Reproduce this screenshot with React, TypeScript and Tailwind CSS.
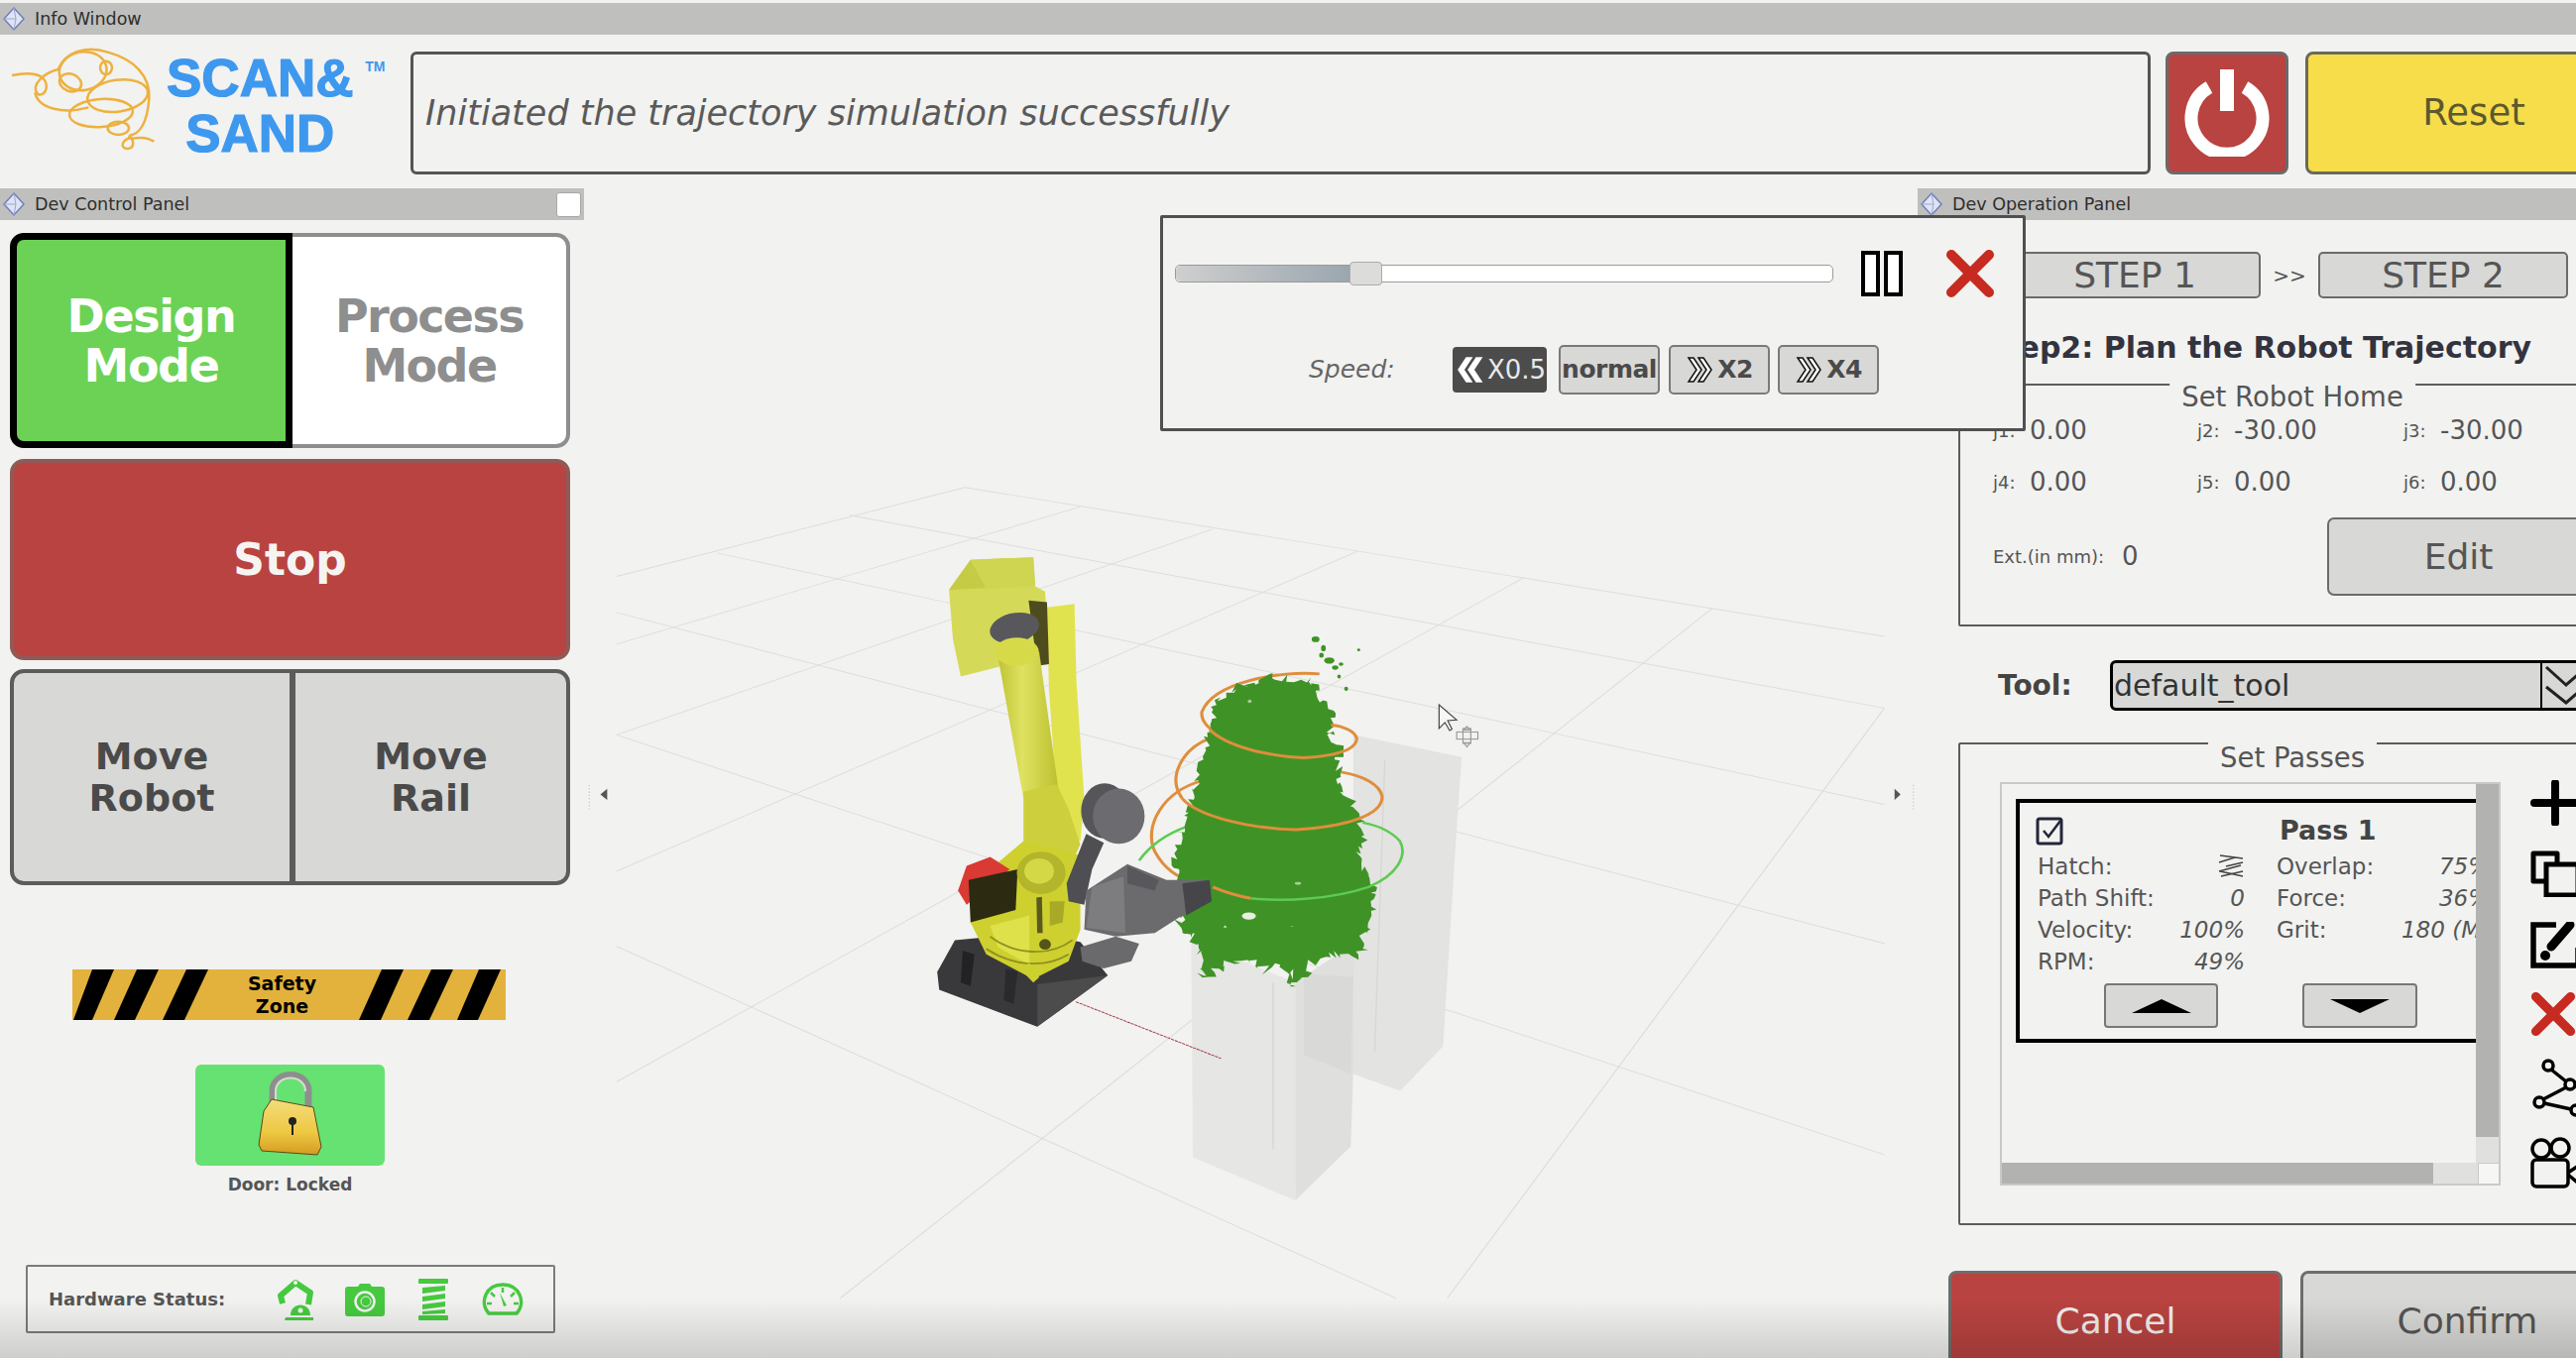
import React from "react";

function Diamond() {
  return (
    <svg width="22" height="26" viewBox="0 0 22 26" className="shrink-0">
      <path d="M11 2 L21 13 L11 24 L1 13 Z" fill="#dfe4f4" stroke="#6f80b8" strokeWidth="1.5" />
      <path d="M11 2 L13 13 L11 24 M1 13 L13 13" fill="none" stroke="#9aa8d2" strokeWidth="1" />
    </svg>
  );
}

function TitleBar({ title, children }: { title: string; children?: React.ReactNode }) {
  return (
    <div className="flex items-center h-[32px] bg-[#bfbfbd] pl-[3px]">
      <Diamond />
      <span className="ml-[10px] text-[17.5px] text-[#2e2e2e]">{title}</span>
      {children}
    </div>
  );
}

function RedX({ size = 50 }: { size?: number }) {
  return (
    <svg width={size} height={size} viewBox="0 0 50 50" className="block">
      <path d="M6 6 L44 44 M44 6 L6 44" stroke="#c62a20" strokeWidth="10" strokeLinecap="round" fill="none" />
    </svg>
  );
}

function Chevrons({ dir, white }: { dir: "left" | "right"; white?: boolean }) {
  const d =
    dir === "left"
      ? "M13 2 L5 14 L13 26 L18 26 L10 14 L18 2 Z M23 2 L15 14 L23 26 L28 26 L20 14 L28 2 Z"
      : "M3 2 L11 14 L3 26 L8 26 L16 14 L8 2 Z M13 2 L21 14 L13 26 L18 26 L26 14 L18 2 Z";
  return (
    <svg width="30" height="28" viewBox="0 0 30 28" className="shrink-0">
      <path d={d} fill="#fff" stroke={white ? "#fff" : "#111"} strokeWidth="1.5" />
    </svg>
  );
}

function Logo() {
  return (
    <div className="flex w-[414px] shrink-0 pl-[2px] mt-[-12px]">
      <svg width="158" height="112" viewBox="0 0 474 336" className="shrink-0">
        <g fill="none" stroke="#edb13f" strokeWidth="7.5">
          <path d="M30 108 C70 100 90 100 110 108 C150 125 135 175 108 165 C85 135 130 100 170 90 C190 40 250 15 320 38 C400 60 450 110 445 180 C440 240 425 285 385 290" />
          <ellipse cx="245" cy="95" rx="72" ry="58" transform="rotate(-10 245 95)" />
          <ellipse cx="207" cy="130" rx="34" ry="26" transform="rotate(20 207 130)" />
          <ellipse cx="315" cy="85" rx="18" ry="20" />
          <ellipse cx="300" cy="222" rx="96" ry="42" transform="rotate(-4 300 222)" />
          <ellipse cx="350" cy="170" rx="92" ry="48" transform="rotate(-8 350 170)" />
          <ellipse cx="352" cy="268" rx="32" ry="20" />
          <path d="M100 160 C110 212 190 225 262 205" />
          <path d="M390 300 C430 294 440 298 460 308 M382 292 C402 302 402 330 378 330 C356 328 362 300 395 296" />
        </g>
      </svg>
      <div className="relative flex flex-col items-center ml-[8px] mt-[11px] font-['Liberation_Sans',sans-serif] font-bold text-[#3e98ee] text-[53px] leading-[56px] [-webkit-text-stroke:1.2px_#3e98ee]">
        <span>SCAN&amp;</span>
        <span>SAND</span>
        <span className="absolute right-[-32px] top-[9px] text-[14px] leading-[14px] [-webkit-text-stroke:0px]">TM</span>
      </div>
    </div>
  );
}

function SafetyBanner() {
  return (
    <div className="relative ml-[73px] w-[437px] h-[51px] bg-[#e3b23c] flex items-center justify-center pr-[14px]">
      <svg width="437" height="51" viewBox="0 0 437 51" className="absolute inset-0">
        {[
          [20, 42, 1, 20],
          [65, 87, 42, 63],
          [115, 137, 91, 113],
          [312, 334, 289, 311],
          [362, 384, 338, 360],
          [410, 432, 388, 409],
        ].map(([a, b, c, d], i) => (
          <polygon key={i} points={`${a},0 ${b},0 ${d},51 ${c},51`} fill="#000" />
        ))}
      </svg>
      <div className="relative text-center text-[19px] leading-[23px] font-bold text-black">
        Safety
        <br />
        Zone
      </div>
    </div>
  );
}

function LockIcon() {
  return (
    <svg width="66" height="88" viewBox="0 0 66 88">
      <defs>
        <linearGradient id="lockBody" x1="0" y1="0" x2="0" y2="1">
          <stop offset="0" stopColor="#f3dc7a" />
          <stop offset="0.6" stopColor="#eec843" />
          <stop offset="1" stopColor="#d49a20" />
        </linearGradient>
      </defs>
      <path d="M15 36 V20 C15 -2 51 -2 51 20 V38" fill="none" stroke="#8d8f8c" strokeWidth="7" />
      <path d="M18 34 V20 C18 2 48 2 48 20" fill="none" stroke="#d9dad6" strokeWidth="2" />
      <path d="M6 40 L14 28 L56 36 L64 76 L60 84 L4 80 L1 74 Z" fill="url(#lockBody)" stroke="#5a4a14" strokeWidth="1" />
      <circle cx="35" cy="50" r="4" fill="#222" />
      <path d="M35 52 V64" stroke="#222" strokeWidth="2" />
    </svg>
  );
}

function StatusIcons() {
  return (
    <div className="flex items-center">
      <svg width="38" height="42" viewBox="0 0 38 42" className="ml-[41px]" fill="#46c93f">
        <path d="M5 25 L3 17 L18 4 L33 14 L31 26" fill="none" stroke="#46c93f" strokeWidth="6" strokeLinejoin="round" />
        <circle cx="18" cy="4" r="2" fill="#f2f2f0" />
        <path d="M8 39 H36 V42 H7 Z M13 37 C13 23 33 23 33 37 Z" />
        <circle cx="23" cy="32" r="2.5" fill="#f2f2f0" />
      </svg>
      <svg width="40" height="34" viewBox="0 0 40 34" className="ml-[30px]">
        <path d="M13 4 L15 1 H25 L27 4 H37 C39 4 40 5 40 7 V31 C40 33 39 34 37 34 H3 C1 34 0 33 0 31 V7 C0 5 1 4 3 4 Z" fill="#46c93f" />
        <circle cx="20" cy="19" r="9.5" fill="none" stroke="#f2f2f0" strokeWidth="2.5" />
        <circle cx="21" cy="19" r="5" fill="none" stroke="#f2f2f0" strokeWidth="1" />
      </svg>
      <svg width="30" height="42" viewBox="0 0 30 42" className="ml-[34px]" fill="#46c93f">
        <rect x="0" y="0" width="30" height="5" rx="1" />
        <rect x="0" y="37" width="30" height="5" rx="1" />
        <path d="M4 9 L27 7 V12 L4 15 Z M4 18 L27 15 V20 L4 23 Z M4 26 L27 23 V28 L4 31 Z M4 33 L27 31 V35 L4 36 Z" />
      </svg>
      <svg width="42" height="34" viewBox="0 0 42 34" className="ml-[34px]">
        <path d="M7 31 C-3 20 4 2 21 2 C38 2 45 20 35 31 Z" fill="none" stroke="#46c93f" strokeWidth="3.5" strokeLinejoin="round" />
        <path d="M21 5 V10 M9 10 L13 14 M33 10 L29 14 M5 21 H10 M37 21 H32" stroke="#46c93f" strokeWidth="2.5" />
        <path d="M18 10 L22 24 L25 23 Z" fill="#46c93f" />
      </svg>
    </div>
  );
}

function LeftPanel() {
  return (
    <div className="w-[589px] shrink-0">
      <TitleBar title="Dev Control Panel">
        <span className="ml-auto mr-[3px] w-[25px] h-[25px] bg-white border border-[#a8a8a8] rounded-[3px]" />
      </TitleBar>
      <div className="flex w-[565px] h-[217px] ml-[10px] mt-[13px]">
        <div className="w-[285px] bg-[#6bd255] border-[7px] border-black rounded-l-[14px] flex items-center justify-center text-center text-white font-bold text-[46px] leading-[50px] tracking-[-1.4px]">
          Design
          <br />
          Mode
        </div>
        <div className="flex-1 bg-white border-[4px] border-l-0 border-[#8e8e8e] rounded-r-[14px] flex items-center justify-center text-center text-[#8e8e8e] font-bold text-[46px] leading-[50px] tracking-[-1.6px]">
          Process
          <br />
          Mode
        </div>
      </div>
      <div className="w-[565px] h-[203px] ml-[10px] mt-[11px] bg-[#b94340] border-[4px] border-[#8f5a58] rounded-[14px] flex items-center justify-center text-[#f6f4f2] font-bold text-[44px]">
        Stop
      </div>
      <div className="flex w-[565px] h-[218px] ml-[10px] mt-[9px] bg-[#d8d8d6] border-[4px] border-[#5c5c5c] rounded-[14px] text-[#4a4a4a] font-bold text-[38px] leading-[42px] text-center">
        <div className="w-[284px] border-r-[6px] border-[#5c5c5c] flex items-center justify-center">
          Move
          <br />
          Robot
        </div>
        <div className="flex-1 flex items-center justify-center">
          Move
          <br />
          Rail
        </div>
      </div>
      <div className="mt-[85px]">
        <SafetyBanner />
      </div>
      <div className="ml-[197px] mt-[45px] w-[191px] h-[102px] bg-[#66e272] rounded-[6px] flex items-center justify-center">
        <LockIcon />
      </div>
      <div className="w-[191px] ml-[197px] mt-[8px] text-center text-[17px] leading-[22px] font-bold text-[#555]">Door: Locked</div>
      <div className="ml-[26px] mt-[70px] w-[534px] h-[69px] border-2 border-[#7b7b7b] rounded-[2px] flex items-center pl-[21px] bg-[#f2f2f0]">
        <span className="text-[18px] font-bold text-[#555] w-[190px]">Hardware Status:</span>
        <StatusIcons />
      </div>
    </div>
  );
}

// seeded jitter so the cloud edge stays the same every render
function jagged(pts: number[][], step: number, amp: number) {
  let seed = 17;
  const rnd = () => {
    seed = (seed * 16807) % 2147483647;
    return seed / 2147483647 - 0.5;
  };
  const out: string[] = [];
  pts.forEach((p, i) => {
    const q = pts[(i + 1) % pts.length];
    const len = Math.hypot(q[0] - p[0], q[1] - p[1]);
    const n = Math.max(1, Math.round(len / step));
    for (let k = 0; k < n; k++) {
      const x = p[0] + ((q[0] - p[0]) * k) / n + rnd() * amp;
      const y = p[1] + ((q[1] - p[1]) * k) / n + rnd() * amp;
      out.push(`${x.toFixed(1)},${y.toFixed(1)}`);
    }
  });
  return out.join(" ");
}

const cloud = [
  [940, 480], [1020, 455], [1120, 465], [1150, 520], [1180, 570], [1165, 620], [1190, 660], [1190, 720],
  [1195, 780], [1240, 840], [1255, 930], [1240, 960], [1270, 1020], [1285, 1080], [1255, 1170], [790, 1170],
  [790, 1100], [770, 980], [790, 870], [820, 790], [840, 680], [860, 600], [880, 520],
];

const fringe = [
  [785, 1150], [1260, 1150], [1248, 1240], [1180, 1245], [1120, 1265], [1090, 1315], [1068, 1320], [1062, 1275],
  [1000, 1285], [940, 1245], [900, 1285], [838, 1305], [855, 1255], [820, 1210],
];

const specks = [
  [1130, 350, 16, 12], [1150, 375, 8, 14], [1165, 410, 22, 14], [1195, 420, 8, 6], [1190, 455, 5, 7], [1208, 490, 6, 8], [1240, 380, 4, 4],
  [1145, 395, 8, 10], [1180, 430, 12, 8],
];

function Scene() {
  const grid = [
    "445,110 1522,378", "310,160 1522,507", "155,228 1522,680", "37,335 1522,930", "37,555 1522,1310", "37,935 950,1568",
    "445,110 37,270", "580,145 37,392", "735,185 37,555", "905,225 37,800", "1100,272 37,1179", "1320,328 299,1568", "1522,507 1010,1568",
  ];
  return (
    <svg width="1345" height="1180" viewBox="589 190 1345 1180" className="block shrink-0">
      <defs>
        <linearGradient id="tube" x1="0" y1="0" x2="1" y2="0">
          <stop offset="0" stopColor="#bfc332" />
          <stop offset="0.4" stopColor="#dfe262" />
          <stop offset="1" stopColor="#bcc02e" />
        </linearGradient>
      </defs>
      <g transform="translate(590 430) scale(0.861 0.561)">
        {grid.map((l, i) => (
          <polyline key={i} points={l} fill="none" stroke="#dddddb" strokeWidth="1.6" />
        ))}
        <polygon points="710,925 712,1315 832,1392 832,1000" fill="#e6e6e4" />
        <polygon points="832,1000 832,1392 897,1295 905,925" fill="#dfdfdd" />
        <line x1="806" y1="1000" x2="806" y2="1300" stroke="#d6d6d4" strokeWidth="1.5" />
        <polygon points="900,555 1027,595 1022,700 1005,1115 955,1195 900,1165 900,700" fill="#e3e3e1" />
        <polygon points="842,985 900,990 897,1165 842,1130" fill="#d9d9d7" />
        <line x1="937" y1="600" x2="925" y2="1125" stroke="#d6d6d4" strokeWidth="1.5" />
        <line x1="575" y1="1035" x2="745" y2="1137" stroke="#a33a4a" strokeWidth="1.6" strokeDasharray="4 1" />
        <path d="M26 652 L18 662 L26 672 Z" fill="#555" />
        <path d="M1534 652 L1541 662 L1534 672 Z" fill="#555" />
        <line x1="5" y1="645" x2="5" y2="690" stroke="#c8c8c8" strokeWidth="1.5" strokeDasharray="2 4" />
        <line x1="1556" y1="645" x2="1556" y2="690" stroke="#c8c8c8" strokeWidth="1.5" strokeDasharray="2 4" />
      </g>
      <g transform="translate(880 520) scale(0.3954 0.357)">
        {/* pedestal under the robot */}
        <polygon points="165,1290 210,1200 400,1180 530,1205 600,1300 420,1445 170,1340" fill="#39393b" />
        <polygon points="420,1325 600,1300 420,1445" fill="#4c4c4c" />
        <polygon points="230,1230 260,1240 250,1330 225,1320" fill="#222224" />
        <polygon points="340,1280 370,1290 360,1380 335,1370" fill="#2a2a2c" />
        {/* rear block */}
        <polygon points="250,125 410,118 415,200 440,215 445,300 420,400 225,455 205,350 195,210" fill="#d4da58" />
        <polygon points="250,125 290,205 195,210" fill="#c5cb45" />
        <polygon points="250,125 410,118 415,200 290,208" fill="#cfd451" />
        <polygon points="445,260 515,250 520,470 540,800 530,920 475,880 450,490" fill="#e0e34e" />
        <polygon points="398,240 445,245 450,420 420,425" fill="#4e4c1e" />
        {/* arm */}
        <polygon points="320,400 425,385 475,780 385,800" fill="url(#tube)" />
        <ellipse cx="362" cy="318" rx="64" ry="42" transform="rotate(-15 362 318)" fill="#58585c" />
        <ellipse cx="368" cy="385" rx="56" ry="40" fill="#d7da48" />
        <polygon points="385,780 470,760 500,830 530,930 500,1000 430,940 385,920" fill="#cdd03c" />
        {/* lower body */}
        <polygon points="250,1150 300,1000 385,920 530,960 530,1170 500,1260 410,1310 290,1240" fill="#cdd02e" />
        <polygon points="300,1160 400,1130 400,1270 320,1220" fill="#dfe14a" />
        <polygon points="240,990 300,965 350,1000 240,1100 218,1060" fill="#d93a33" />
        <polygon points="245,1030 370,1000 365,1115 250,1150" fill="#2c2a10" />
        <ellipse cx="430" cy="1010" rx="62" ry="60" fill="#b3b52a" />
        <ellipse cx="425" cy="1005" rx="38" ry="36" fill="#d5d846" />
        <polygon points="418,1080 432,1078 434,1180 420,1180" fill="#5a5a1f" />
        <polygon points="452,1090 490,1090 485,1150 452,1160" fill="#a8aa25" />
        <ellipse cx="440" cy="1212" rx="15" ry="15" fill="#55531a" />
        <path d="M300 1190 C360 1240 450 1250 510 1200 M290 1225 C360 1275 440 1280 500 1240" fill="none" stroke="#8f9120" strokeWidth="5" />
        <polygon points="375,1280 400,1265 425,1305 410,1320" fill="#cdd02e" />
        {/* cloud and rings */}
        <path d="M1140 448 C1040 438 870 470 840 555 C835 600 900 640 1000 665" fill="none" stroke="#df8e3d" strokeWidth="8" />
        <path d="M860 630 C790 660 750 740 790 800" fill="none" stroke="#df8e3d" strokeWidth="8" />
        <path d="M840 750 C740 780 690 880 720 950 C745 1000 780 1025 810 1030" fill="none" stroke="#df8e3d" strokeWidth="8" />
        <path d="M680 975 C710 930 750 900 800 880" fill="none" stroke="#5dcb52" strokeWidth="7" />
        <polygon points={jagged(cloud, 9, 24)} fill="#3f9326" />
        <polygon points={jagged(fringe, 8, 32)} fill="#3f9326" />
        {specks.map(([x, y, w, h], i) => (
          <ellipse key={i} cx={x} cy={y} rx={w / 2 + 2} ry={h / 2 + 2} fill="#3f9326" />
        ))}
        <ellipse cx="960" cy="1132" rx="18" ry="10" fill="#e7efe2" />
        <ellipse cx="962" cy="525" rx="5" ry="5" fill="#a5cc96" />
        <ellipse cx="1085" cy="1040" rx="8" ry="4" fill="#a5cc96" />
        <path d="M860 605 C900 650 1000 680 1100 685 C1170 680 1235 665 1235 630 C1230 610 1200 595 1170 592" fill="none" stroke="#df8e3d" strokeWidth="8" />
        <path d="M790 800 C830 850 960 885 1080 888 C1200 880 1300 850 1300 795 C1295 760 1250 735 1195 725" fill="none" stroke="#df8e3d" strokeWidth="8" />
        <path d="M868 1050 C900 1065 930 1075 965 1082" fill="none" stroke="#df8e3d" strokeWidth="8" />
        <path d="M965 1082 C1050 1092 1170 1085 1265 1050 C1340 1015 1365 960 1345 920 C1320 890 1285 875 1250 868" fill="none" stroke="#5dcb52" strokeWidth="7" />
        {/* tool on the flange, in front of the cloud */}
        <ellipse cx="592" cy="835" rx="60" ry="78" fill="#55555a" />
        <ellipse cx="628" cy="850" rx="66" ry="78" fill="#6c6c70" />
        <polygon points="545,900 590,925 560,1000 540,1100 500,1090 495,1040" fill="#4e4e53" />
        <polygon points="545,1060 650,985 750,1030 850,1030 865,1090 790,1130 720,1180 620,1190 540,1170" fill="#6b6b6e" />
        <polygon points="560,1050 640,1020 645,1180 545,1165" fill="#7d7d80" />
        <polygon points="650,990 730,1030 720,1060 650,1040" fill="#58585c" />
        <polygon points="790,1040 860,1030 865,1090 800,1130" fill="#46464a" />
        <polygon points="530,1220 620,1190 680,1210 660,1260 590,1280 535,1260" fill="#6a6a6d" />
        {/* cursor */}
        <path d="M1445 535 L1445 602 L1460 585 L1472 608 L1478 604 L1467 580 L1490 578 Z" fill="#f7f7f5" stroke="#444" strokeWidth="3" />
        <g fill="none" stroke="#9a9a9a" strokeWidth="3">
          <rect x="1490" y="612" width="54" height="20" />
          <rect x="1506" y="602" width="20" height="42" />
          <path d="M1516 596 L1508 606 H1524 Z M1516 654 L1508 642 H1524 Z" />
        </g>
      </g>
    </svg>
  );
}

function Joint({ label, value }: { label: string; value: string }) {
  return (
    <div className="flex items-center h-[40px] text-[#555]">
      <span className="w-[37px] text-[18px]">{label}</span>
      <span className="text-[26px]">{value}</span>
    </div>
  );
}

function PassRow({ label, value }: { label: string; value: React.ReactNode }) {
  return (
    <div className="flex justify-between items-center h-[32px] text-[23px] text-[#565656]">
      <span className="whitespace-nowrap">{label}</span>
      <span className="italic whitespace-nowrap">{value}</span>
    </div>
  );
}

function PassCard() {
  return (
    <div className="relative w-[520px] h-[246px] border-[4px] border-black pt-[13px] pl-[16px] ml-[14px] mt-[15px]">
      <div className="flex items-center h-[30px]">
        <svg width="28" height="30" viewBox="0 0 28 30" className="shrink-0">
          <rect x="2" y="3" width="24" height="25" rx="2" fill="none" stroke="#23263a" strokeWidth="3" />
          <path d="M8 15 L13 21 L25 5" fill="none" stroke="#23263a" strokeWidth="2.5" />
        </svg>
        <span className="ml-[218px] text-[27px] font-bold text-[#444]">Pass 1</span>
      </div>
      <div className="grid grid-cols-[209px_215px] gap-x-[32px] mt-[5px] ml-[2px]">
        <PassRow
          label="Hatch:"
          value={
            <svg width="28" height="26" viewBox="0 0 28 26" className="block">
              <path d="M3 2 L26 5 M2 9 L18 4 M9 13 L26 9 M2 18 L24 12 M4 23 L26 18 M3 18 L26 23" stroke="#444" strokeWidth="1.6" fill="none" />
            </svg>
          }
        />
        <PassRow label="Overlap:" value="75%" />
        <PassRow label="Path Shift:" value="0" />
        <PassRow label="Force:" value="36%" />
        <PassRow label="Velocity:" value="100%" />
        <PassRow label="Grit:" value="180 (M)" />
        <PassRow label="RPM:" value="49%" />
        <div />
      </div>
      <div className="flex mt-[6px] ml-[69px]">
        <div className="w-[115px] h-[45px] bg-[#d8d8d6] border-2 border-[#777] rounded-[4px] flex items-center justify-center">
          <svg width="60" height="14" viewBox="0 0 60 14">
            <path d="M0 14 L30 0 L60 14 Z" fill="#000" />
          </svg>
        </div>
        <div className="w-[116px] h-[45px] ml-[85px] bg-[#d8d8d6] border-2 border-[#777] rounded-[4px] flex items-center justify-center">
          <svg width="60" height="14" viewBox="0 0 60 14">
            <path d="M0 0 L60 0 L30 14 Z" fill="#000" />
          </svg>
        </div>
      </div>
    </div>
  );
}

function ToolColumn() {
  return (
    <div className="flex flex-col ml-[30px] mt-[-2px] w-[60px] shrink-0">
      <svg width="50" height="46" viewBox="0 0 50 46" className="block">
        <path d="M4 23 H46 M25 3 V43" stroke="#000" strokeWidth="8" strokeLinecap="round" />
      </svg>
      <svg width="50" height="47" viewBox="0 0 50 47" className="block mt-[25px]">
        <path d="M16 31 H3 V3 H27 V14" fill="none" stroke="#000" strokeWidth="5" strokeLinejoin="round" />
        <rect x="16" y="14" width="32" height="31" fill="none" stroke="#000" strokeWidth="5" />
      </svg>
      <svg width="50" height="47" viewBox="0 0 50 47" className="block mt-[25px]">
        <path d="M26 3 H3 V44 H48 V26" fill="none" stroke="#000" strokeWidth="5.5" />
        <path d="M21 25 L40 3" stroke="#000" strokeWidth="9" strokeLinecap="round" />
        <circle cx="15" cy="34" r="5" fill="#000" />
      </svg>
      <div className="mt-[23px]">
        <RedX size={46} />
      </div>
      <svg width="50" height="59" viewBox="0 0 50 59" className="block mt-[22px]">
        <g fill="none" stroke="#000" strokeWidth="3.5">
          <circle cx="18" cy="7" r="5" />
          <circle cx="40" cy="26" r="5" />
          <circle cx="9" cy="44" r="5" />
          <circle cx="46" cy="52" r="5" />
          <path d="M21 11 L36 23 M36 29 L13 41 M14 45 L41 51" />
        </g>
      </svg>
      <svg width="50" height="52" viewBox="0 0 50 52" className="block mt-[20px]">
        <g fill="none" stroke="#000" strokeWidth="3.5">
          <circle cx="11" cy="12" r="9" />
          <circle cx="30" cy="11" r="9" />
          <rect x="2" y="23" width="36" height="27" rx="4" />
          <path d="M38 36 L50 28 M38 38 L50 48" />
        </g>
      </svg>
    </div>
  );
}

function RightPanel() {
  return (
    <div className="w-[664px] shrink-0">
      <TitleBar title="Dev Operation Panel" />
      <div className="flex items-center mt-[32px] ml-[92px] text-[#555]">
        <div className="w-[254px] h-[47px] shrink-0 bg-[#d8d8d6] border-2 border-[#6b6b6b] rounded-[5px] flex items-center justify-center text-[36px]">STEP 1</div>
        <div className="w-[58px] shrink-0 text-center text-[20px]">&gt;&gt;</div>
        <div className="w-[252px] h-[47px] shrink-0 bg-[#d8d8d6] border-2 border-[#6b6b6b] rounded-[5px] flex items-center justify-center text-[36px]">STEP 2</div>
      </div>
      <div className="flex justify-end pr-[45px] mt-[29px] h-[40px] items-center text-[30px] font-bold text-[#33333f] whitespace-nowrap">
        Step2: Plan the Robot Trajectory
      </div>
      <div className="relative ml-[41px] mt-[17px] w-[670px] h-[245px] border-2 border-[#5c5c5c] rounded-[2px]">
        <span className="absolute left-[335px] top-[-5px] -translate-x-1/2 bg-[#f2f2f0] px-[12px] text-[27.5px] leading-[32px] text-[#555] whitespace-nowrap">Set Robot Home</span>
        <div className="grid grid-cols-[206px_208px_180px] gap-y-[12px] ml-[33px] mt-[25px]">
          <Joint label="j1:" value="0.00" />
          <Joint label="j2:" value="-30.00" />
          <Joint label="j3:" value="-30.00" />
          <Joint label="j4:" value="0.00" />
          <Joint label="j5:" value="0.00" />
          <Joint label="j6:" value="0.00" />
        </div>
        <div className="flex items-center mt-[16px] ml-[33px] text-[#555]">
          <span className="w-[130px] text-[18px]">Ext.(in mm):</span>
          <span className="text-[26px]">0</span>
          <div className="ml-[190px] w-[266px] h-[79px] shrink-0 bg-[#d8d8d6] border-2 border-[#6b6b6b] rounded-[7px] flex items-center justify-center text-[36px]">Edit</div>
        </div>
      </div>
      <div className="flex items-center mt-[34px] ml-[81px]">
        <span className="w-[113px] shrink-0 text-[28px] font-bold text-[#444]">Tool:</span>
        <div className="w-[520px] h-[51px] shrink-0 bg-[#d8d8d6] border-[3px] border-black rounded-[6px] flex items-center text-[30px] text-[#333] pl-[1px]">
          <span className="w-[430px]">default_tool</span>
          <span className="w-[60px] h-full border-l-2 border-black flex items-center">
            <svg width="40" height="45" viewBox="0 0 40 45">
              <path d="M4 4 L24 22 L40 8 M4 24 L24 40 L40 26" fill="none" stroke="#222" strokeWidth="3" />
            </svg>
          </span>
        </div>
      </div>
      <div className="relative ml-[41px] mt-[32px] w-[670px] h-[487px] border-2 border-[#5c5c5c] rounded-[2px] pt-[38px] pl-[40px] flex items-start">
        <span className="absolute left-[335px] top-[-3px] -translate-x-1/2 bg-[#f2f2f0] px-[12px] text-[27.5px] leading-[32px] text-[#555] whitespace-nowrap">Set Passes</span>
        <div className="w-[505px] h-[407px] border-2 border-[#c9c9c7] flex flex-col shrink-0">
          <div className="flex h-[382px]">
            <div className="w-[480px] overflow-hidden">
              <PassCard />
            </div>
            <div className="w-[23px] flex flex-col">
              <div className="h-[356px] bg-[#b2b2b0]" />
              <div className="flex-1 bg-[#e0e0de]" />
            </div>
          </div>
          <div className="flex flex-1">
            <div className="w-[435px] bg-[#b2b2b0]" />
            <div className="w-[45px] bg-[#e0e0de]" />
            <div className="flex-1 bg-[#f6f6f4] border-l border-t border-[#c9c9c7]" />
          </div>
        </div>
        <ToolColumn />
      </div>
      <div className="flex mt-[46px] ml-[31px] text-[36px]">
        <div className="w-[337px] h-[110px] shrink-0 bg-[#b94340] border-[3px] border-[#6e6e6e] rounded-[8px] flex items-center justify-center pb-[8px] text-[#f1efed]">Cancel</div>
        <div className="w-[337px] h-[110px] shrink-0 ml-[18px] bg-[#d8d8d6] border-[3px] border-[#6e6e6e] rounded-[8px] flex items-center justify-center pb-[8px] text-[#555]">Confirm</div>
      </div>
    </div>
  );
}

function SpeedButton({ children, active }: { children: React.ReactNode; active?: boolean }) {
  return (
    <div
      className={
        active
          ? "w-[95px] h-[46px] bg-[#4c4c4c] rounded-[4px] flex items-center justify-center gap-[4px] text-[#e8e8e8] text-[26px]"
          : "w-[102px] h-[50px] bg-[#d8d8d6] border-2 border-[#7a7a7a] rounded-[5px] flex items-center justify-center gap-[2px] text-[#4a4a4a] font-bold text-[25px] tracking-[-0.5px]"
      }
    >
      {children}
    </div>
  );
}

function SimPanel() {
  return (
    <div className="absolute left-[1170px] top-[217px] w-[873px] h-[218px] bg-[#f2f2f0] border-[3px] border-[#505050] rounded-[2px]">
      <div className="flex items-center h-[46px] mt-[33px] ml-[12px]">
        <div className="relative w-[664px] h-[18px] bg-white border border-[#9a9a9a] rounded-[5px] shrink-0">
          <div className="w-[176px] h-full rounded-l-[5px] bg-linear-to-r from-[#cfcfcf] to-[#9aa6ae]" />
          <div className="absolute left-[175px] top-[-4px] w-[33px] h-[24px] bg-[#dcdcda] border border-[#ababab] rounded-[4px]" />
        </div>
        <div className="flex ml-[28px] gap-[4px]">
          <div className="w-[19px] h-[46px] border-[4px] border-black bg-white" />
          <div className="w-[19px] h-[46px] border-[4px] border-black bg-white" />
        </div>
        <div className="ml-[43px]">
          <RedX size={50} />
        </div>
      </div>
      <div className="flex items-center mt-[49px] ml-[147px]">
        <span className="w-[145px] italic text-[#666] text-[25px]">Speed:</span>
        <SpeedButton active>
          <Chevrons dir="left" white />
          X0.5
        </SpeedButton>
        <div className="ml-[12px]">
          <SpeedButton>normal</SpeedButton>
        </div>
        <div className="ml-[9px]">
          <SpeedButton>
            <Chevrons dir="right" />
            X2
          </SpeedButton>
        </div>
        <div className="ml-[8px]">
          <SpeedButton>
            <Chevrons dir="right" />
            X4
          </SpeedButton>
        </div>
      </div>
    </div>
  );
}

export default function App() {
  return (
    <div className="relative w-[2598px] h-[1370px] overflow-hidden bg-[#f2f2f0] font-['DejaVu_Sans',sans-serif]">
      <div className="pt-[3px]">
        <TitleBar title="Info Window" />
      </div>
      <div className="flex h-[155px] pt-[17px] items-start">
        <Logo />
        <div className="w-[1755px] h-[124px] shrink-0 border-[3px] border-[#555] rounded-[6px] flex items-center pl-[12px] italic text-[35px] text-[#5a5a5a]">
          Initiated the trajectory simulation successfully
        </div>
        <div className="w-[124px] h-[124px] ml-[15px] shrink-0 bg-[#b94340] border-[3px] border-[#6a6a6a] rounded-[8px] flex items-center justify-center">
          <svg width="88" height="88" viewBox="0 0 88 88">
            <path d="M26 18 A36 36 0 1 0 62 18" fill="none" stroke="#fff" strokeWidth="13" />
            <rect x="37" y="0" width="14" height="42" fill="#fff" />
          </svg>
        </div>
        <div className="w-[340px] h-[124px] ml-[17px] shrink-0 bg-[#f7dd4a] border-[3px] border-[#6a6a5a] rounded-[8px] flex items-center justify-center text-[37px] text-[#5c5830]">
          Reset
        </div>
      </div>
      <div className="flex h-[1180px]">
        <LeftPanel />
        <Scene />
        <RightPanel />
      </div>
      <SimPanel />
      <div className="absolute inset-x-0 bottom-0 h-[60px] bg-linear-to-b from-transparent to-black/15 pointer-events-none" />
    </div>
  );
}
